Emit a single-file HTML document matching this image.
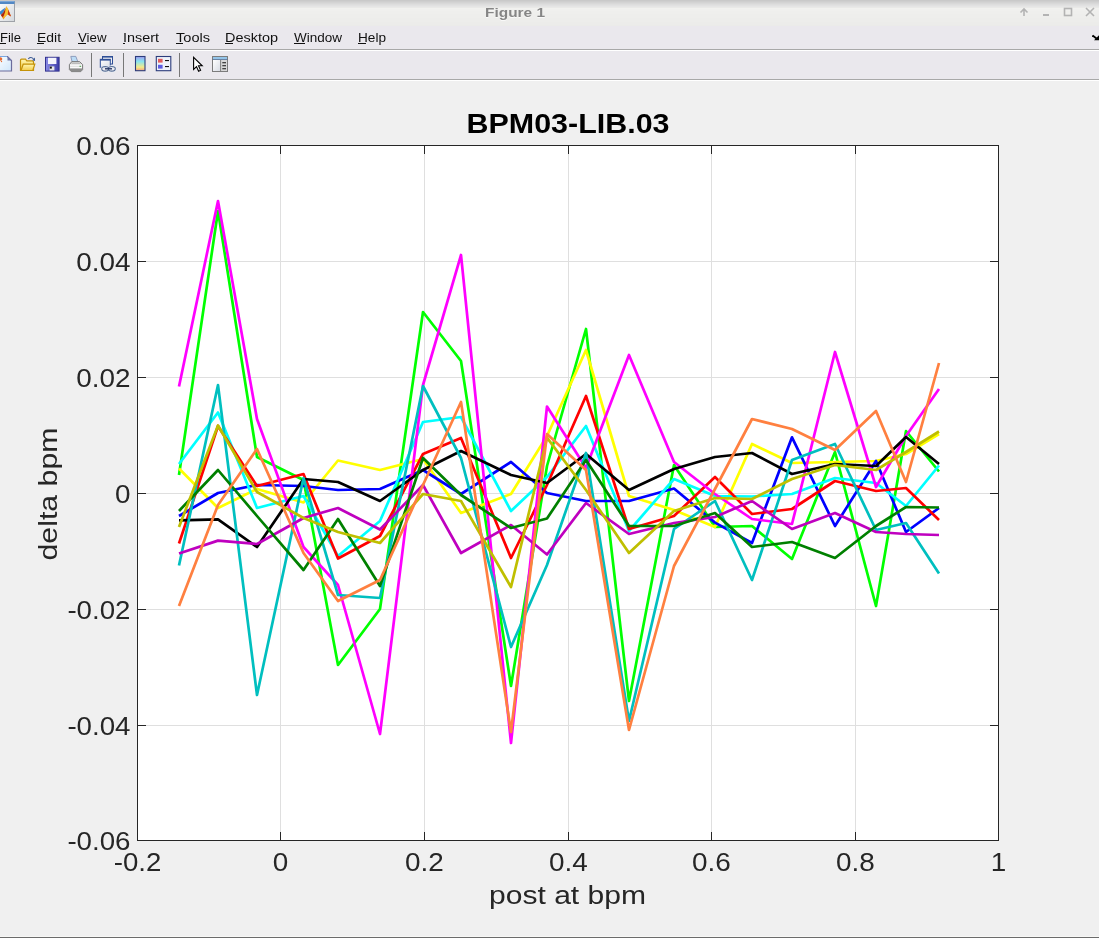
<!DOCTYPE html>
<html><head><meta charset="utf-8"><style>
html,body{margin:0;padding:0;width:1099px;height:938px;overflow:hidden;background:#f0f0f0;}
svg{display:block;will-change:transform;}
text{font-family:"Liberation Sans", sans-serif;}
</style></head><body>
<svg width="1099" height="938" viewBox="0 0 1099 938">
<defs>
<linearGradient id="tb" x1="0" y1="0" x2="0" y2="1">
<stop offset="0" stop-color="#c9c9c9"/><stop offset="0.15" stop-color="#d8d8d8"/><stop offset="0.28" stop-color="#e8e8e7"/><stop offset="0.33" stop-color="#f2f2f0"/><stop offset="0.55" stop-color="#eeeeec"/><stop offset="1" stop-color="#ebebe9"/>
</linearGradient>
</defs>
<!-- title bar -->
<rect x="0" y="0" width="1099" height="1" fill="#c9c9c9"/><rect x="0" y="1" width="1099" height="1" fill="#cecece"/><rect x="0" y="2" width="1099" height="1" fill="#d3d3d3"/><rect x="0" y="3" width="1099" height="1" fill="#d8d8d8"/><rect x="0" y="4" width="1099" height="1" fill="#dddddd"/><rect x="0" y="5" width="1099" height="1" fill="#e1e1e1"/><rect x="0" y="6" width="1099" height="1" fill="#e5e5e5"/><rect x="0" y="7" width="1099" height="1" fill="#e9e9e7"/><rect x="0" y="8" width="1099" height="1" fill="#f1f1ef"/><rect x="0" y="9" width="1099" height="1" fill="#f0f0ee"/><rect x="0" y="10" width="1099" height="1" fill="#f0f0ee"/><rect x="0" y="11" width="1099" height="1" fill="#efefed"/><rect x="0" y="12" width="1099" height="1" fill="#efefed"/><rect x="0" y="13" width="1099" height="1" fill="#efefed"/><rect x="0" y="14" width="1099" height="1" fill="#eeeeec"/><rect x="0" y="15" width="1099" height="1" fill="#eeeeec"/><rect x="0" y="16" width="1099" height="1" fill="#eeeeec"/><rect x="0" y="17" width="1099" height="1" fill="#eeeeec"/><rect x="0" y="18" width="1099" height="1" fill="#ededeb"/><rect x="0" y="19" width="1099" height="1" fill="#ededeb"/><rect x="0" y="20" width="1099" height="1" fill="#ededeb"/><rect x="0" y="21" width="1099" height="1" fill="#ededeb"/><rect x="0" y="22" width="1099" height="1" fill="#ececea"/><rect x="0" y="23" width="1099" height="1" fill="#ececea"/><rect x="0" y="24" width="1099" height="1" fill="#ececea"/><rect x="0" y="25" width="1099" height="1" fill="#ebebe9"/>
<text x="515" y="17.5" text-anchor="middle" font-size="13" font-weight="bold" fill="#ffffff" opacity="0.7" textLength="60" lengthAdjust="spacingAndGlyphs">Figure 1</text>
<text x="515" y="17" text-anchor="middle" font-size="13" font-weight="bold" fill="#858585" textLength="60" lengthAdjust="spacingAndGlyphs">Figure 1</text>
<!-- window buttons -->
<g stroke="#b3b3b3" stroke-width="1.6" fill="none">
<path d="M1024 16V9M1020.5 12.5L1024 9L1027.5 12.5"/>
<path d="M1043 15H1049" stroke-width="2"/>
<rect x="1064.5" y="8.5" width="7" height="7"/>
<path d="M1086 8L1094 16M1094 8L1086 16"/>
</g>
<!-- menu bar -->
<rect x="0" y="26" width="1099" height="23" fill="#eae8ed"/>
<rect x="0" y="49" width="1099" height="1" fill="#a8a8a8"/>
<rect x="0" y="50" width="1099" height="1" fill="#ffffff"/>
<g font-size="13" fill="#111">
<text x="0" y="42" textLength="21" lengthAdjust="spacingAndGlyphs">File</text><text x="37" y="42" textLength="24" lengthAdjust="spacingAndGlyphs">Edit</text><text x="78" y="42" textLength="28.5" lengthAdjust="spacingAndGlyphs">View</text><text x="123" y="42" textLength="36" lengthAdjust="spacingAndGlyphs">Insert</text><text x="176" y="42" textLength="34" lengthAdjust="spacingAndGlyphs">Tools</text><text x="225" y="42" textLength="53" lengthAdjust="spacingAndGlyphs">Desktop</text><text x="294" y="42" textLength="48" lengthAdjust="spacingAndGlyphs">Window</text><text x="358" y="42" textLength="28" lengthAdjust="spacingAndGlyphs">Help</text>
</g>
<g fill="#111">
<rect x="0" y="43" width="6" height="1"/><rect x="37" y="43" width="7" height="1"/><rect x="78" y="43" width="8" height="1"/><rect x="123" y="43" width="2" height="1"/><rect x="176" y="43" width="7" height="1"/><rect x="225" y="43" width="8" height="1"/><rect x="294" y="43" width="11" height="1"/><rect x="358" y="43" width="8" height="1"/>
</g>
<path d="M1092.6 35.6 L1096.5 38.4" stroke="#000" stroke-width="1.8" fill="none"/><path d="M1094 40.2 L1099.5 40.2 L1099.5 34.8 Z" fill="#000"/><rect x="1092" y="35.6" width="1.2" height="1.2" fill="#000"/>
<!-- toolbar -->
<rect x="0" y="51" width="1099" height="28" fill="#eae8ed"/>
<rect x="0" y="79" width="1099" height="1" fill="#a8a8a8"/>
<rect x="0" y="80" width="1099" height="1" fill="#ffffff"/>

<defs>
<linearGradient id="pg" x1="0" y1="0" x2="1" y2="1"><stop offset="0" stop-color="#ffffff"/><stop offset="1" stop-color="#cfe6fb"/></linearGradient>
<linearGradient id="fg" x1="0" y1="0" x2="0" y2="1"><stop offset="0" stop-color="#fff6b0"/><stop offset="1" stop-color="#f3cc4a"/></linearGradient>
<linearGradient id="flg" x1="0" y1="0" x2="1" y2="0"><stop offset="0" stop-color="#8c8ce6"/><stop offset="1" stop-color="#3c3ca8"/></linearGradient>
<linearGradient id="cbg" x1="0" y1="0" x2="0" y2="1"><stop offset="0" stop-color="#a09cf0"/><stop offset="0.35" stop-color="#88e4f0"/><stop offset="0.75" stop-color="#f4ec88"/><stop offset="1" stop-color="#f4a080"/></linearGradient>
<linearGradient id="wg" x1="0" y1="0" x2="1" y2="1"><stop offset="0" stop-color="#ffffff"/><stop offset="1" stop-color="#d8dce4"/></linearGradient>
<linearGradient id="ml" x1="0" y1="0" x2="1" y2="1"><stop offset="0" stop-color="#f8c020"/><stop offset="0.5" stop-color="#e86010"/><stop offset="1" stop-color="#a01810"/></linearGradient>
</defs>
<!-- matlab logo -->
<linearGradient id="lb" x1="0" y1="0" x2="1" y2="1"><stop offset="0" stop-color="#ffffff"/><stop offset="1" stop-color="#d4d8dc"/></linearGradient>
<rect x="-1" y="1.5" width="15.5" height="20" fill="url(#lb)" stroke="#9ea2a8" stroke-width="1"/>
<rect x="-1" y="1" width="15.5" height="3" fill="#5288c4"/>
<rect x="-1" y="1" width="15.5" height="1" fill="#7aa6d8"/>
<path d="M0 11.5 L3 9.2 L5.6 7.4 L4 11.5 L1.6 14.6 L0 14.4 Z" fill="#3a86cc"/>
<path d="M0.9 14.9 L3.2 12.8 L5.6 8.6 L6.4 6.2 L8.2 9.5 L11.1 16.6 L9.4 15.4 L7.4 14.6 L5.2 16.8 L3.4 19.6 Z" fill="#f09020"/>
<path d="M0.9 14.9 L3.2 12.8 L5.6 8.6 L5.2 12.4 L3.8 15.6 L2.4 17.2 Z" fill="#a82414"/>
<path d="M6.4 6.2 L8.2 9.5 L9.6 13.2 L7.4 14.6 L5.2 16.8 L3.4 19.6 L4.2 15.4 L5.4 11 Z" fill="#f8c030"/>
<path d="M8.2 9.5 L11.1 16.6 L9.4 15.4 L7.8 14.2 Z" fill="#c83818"/>
<!-- new -->
<path d="M-3 56.5 H7.5 L11.5 60.5 V71 H-3 Z" fill="url(#pg)" stroke="#6c6c9c" stroke-width="1.2"/>
<path d="M7.5 56.5 V60.5 H11.5 Z" fill="#6c74a8"/>
<path d="M-3 56.5 H7" stroke="#7aa6e0" stroke-width="1"/>
<circle cx="0.5" cy="59" r="1.8" fill="#e86a30"/><circle cx="1.5" cy="61.5" r="0.7" fill="#e86a30"/>
<!-- open -->
<path d="M20.5 70.5 V60.2 Q20.5 59.2 21.5 59.2 H25.5 L26.8 60.8 H32.5 Q33.5 60.8 33.5 62 V70.5 Z" fill="url(#fg)" stroke="#c49208" stroke-width="1.2"/>
<path d="M21 70.5 L23.2 64.2 H34.8 L32.8 70.5 Z" fill="url(#fg)" stroke="#c49208" stroke-width="1.2"/>
<path d="M28.3 58.8 Q31 56.2 33.5 59" stroke="#3c5a94" stroke-width="1.1" fill="none"/>
<path d="M32.2 60.2 L35 57.6 L35 61 Z" fill="#3c5a94"/>
<!-- save -->
<rect x="45.5" y="57.3" width="13.6" height="13.8" fill="url(#flg)" stroke="#32328e" stroke-width="1"/>
<rect x="48" y="57.8" width="8.4" height="6.2" fill="#f4f4fc"/>
<rect x="49.6" y="66.4" width="4.8" height="4" fill="#e8e8e8"/>
<rect x="49.8" y="66.6" width="2" height="2" fill="#111"/>
<!-- print -->
<path d="M70.8 56.4 H75.8 L78 62.2 H72.2 Z" fill="#bcdcf6" stroke="#7c8cb0" stroke-width="0.8"/>
<path d="M69.4 64.6 L71.8 61.6 H79.6 L82.6 64.6 V69.6 L80.8 71.6 H71.4 L69.4 69.6 Z" fill="#e4e4e4" stroke="#6e6e6e" stroke-width="0.9"/>
<path d="M70 65.2 H82 M70.2 67.6 H82" stroke="#ffffff" stroke-width="0.9"/>
<path d="M69.6 68.6 H82.4 V69.8 L80.8 71.4 H71.2 L69.6 69.8 Z" fill="#8c8c8c"/>
<path d="M71.6 63.2 H80.4" stroke="#9a9a9a" stroke-width="0.8"/>
<rect x="79.6" y="65.8" width="1.3" height="1" fill="#30a030"/>
<!-- link figure -->
<rect x="102.5" y="56.5" width="10" height="7.5" fill="#f0f0f4" stroke="#2e4e96" stroke-width="1"/>
<rect x="102.5" y="56" width="10" height="1.6" fill="#2e4e96"/>
<rect x="100.3" y="59.3" width="10" height="8" fill="url(#wg)" stroke="#2e4e96" stroke-width="1"/>
<rect x="100.3" y="59" width="10" height="1.6" fill="#2e4e96"/>
<ellipse cx="105.2" cy="68.8" rx="3.5" ry="2.3" fill="none" stroke="#e8eef6" stroke-width="2.4"/>
<ellipse cx="111.8" cy="68.8" rx="3.5" ry="2.3" fill="none" stroke="#e8eef6" stroke-width="2.4"/>
<ellipse cx="105.2" cy="68.8" rx="3.5" ry="2.3" fill="none" stroke="#5a6e94" stroke-width="1.1"/>
<ellipse cx="111.8" cy="68.8" rx="3.5" ry="2.3" fill="none" stroke="#5a6e94" stroke-width="1.1"/>
<path d="M105 68.8 H112" stroke="#1e2e5e" stroke-width="1.3"/>
<!-- colorbar -->
<rect x="135.5" y="56.5" width="9.5" height="14.2" fill="url(#cbg)" stroke="#2c3c7c" stroke-width="1.1"/>
<!-- legend -->
<rect x="156.3" y="56.5" width="14.5" height="14.2" fill="#eef2fa" stroke="#2c3c7c" stroke-width="1.1"/>
<rect x="158" y="58.8" width="4.6" height="3.8" fill="#e25c5c"/>
<rect x="158" y="64.8" width="4.6" height="3.8" fill="#5c5ce2"/>
<rect x="165" y="60" width="4" height="1.1" fill="#111"/>
<rect x="165" y="66" width="4" height="1.1" fill="#111"/>
<!-- pointer -->
<path d="M193.6 57.4 V69.4 L196.5 66.6 L198.6 71.2 L200.6 70.3 L198.5 65.8 H202.2 Z" fill="#fff" stroke="#000" stroke-width="1.1" stroke-linejoin="miter"/>
<!-- panel -->
<rect x="212.5" y="56.5" width="15" height="15" fill="#d8d8d8" stroke="#7c7c7c" stroke-width="1"/>
<rect x="213" y="57" width="14" height="2" fill="#94c4e8"/>
<path d="M212.5 59.5 H227.5" stroke="#4c6c94" stroke-width="0.8"/>
<rect x="213" y="60" width="7.3" height="11" fill="url(#wg)"/>
<path d="M220.6 60 V71" stroke="#808080" stroke-width="1"/>
<path d="M222.3 62.8 H226 M222.3 65.8 H226 M222.3 68.8 H226" stroke="#111" stroke-width="1.1"/>

<g stroke="#777" stroke-width="1"><path d="M91.5 53V77M123.5 53V77M179.5 53V77"/></g>
<!-- axes -->
<rect x="137" y="145" width="861" height="695" fill="#ffffff"/>
<path d="M280.5 145V840M424.5 145V840M568.5 145V840M711.5 145V840M855.5 145V840M137 725.5H998M137 609.5H998M137 493.5H998M137 377.5H998M137 261.5H998" stroke="#dfdfdf" stroke-width="1" fill="none"/>
<g fill="none" stroke-width="2.7" stroke-linejoin="round" stroke-linecap="butt">
<path d="M179 475 L218 211 L257 457 L303.5 480 L338 665 L380 609 L423 312 L461 361 L511 686 L547 466 L586 329 L629 701 L674 465 L715 527 L752 526 L792 559 L835 452 L876 606 L906 431 L939 471.5" stroke="#00ff00"/>
<path d="M179 468.5 L218 508 L257 489 L303.5 502.5 L338 460.5 L380 470 L423 459 L461 513 L511 494 L547 436 L586 350 L629 496 L674 510 L715 527 L752 444 L792 463 L835 462 L876 461 L906 454 L939 434" stroke="#ffff00"/>
<path d="M179 516 L218 493 L257 485 L303.5 486 L338 490 L380 489 L423 470 L461 494 L511 462 L547 493 L586 501 L629 501 L674 488.5 L715 522.6 L752 543 L792 437.3 L835 526 L876 461 L906 532 L939 508" stroke="#0000ff"/>
<path d="M179 464 L218 412.5 L257 508 L303.5 496 L338 556 L380 521 L423 422 L461 417 L511 511 L547 477 L586 426 L629 531 L674 479 L715 496 L752 496.5 L792 494 L835 478 L876 483 L906 506 L939 465.5" stroke="#00ffff"/>
<path d="M179 543.5 L218 426 L257 486 L303.5 474 L338 558.5 L380 536 L423 454 L461 438 L511 558 L547 485 L586 396 L629 529 L674 516 L715 477 L752 514 L792 509 L835 481 L876 491 L906 488 L939 520" stroke="#ff0000"/>
<path d="M179 386.5 L218 201 L257 419 L303.5 547 L338 585 L380 734 L423 385 L461 255 L511 743 L547 406.5 L586 468 L629 355 L674 462 L715 494 L752 519 L792 524 L835 352 L876 487 L906 436 L939 389" stroke="#ff00ff"/>
<path d="M179 520.4 L218 519.4 L257 547 L303.5 479 L338 482 L380 501 L423 470 L461 451 L511 475 L547 483 L586 454 L629 490 L674 469 L715 457 L752 453 L792 474 L835 464 L876 466 L906 437 L939 464" stroke="#000000"/>
<path d="M179 565.5 L218 385 L257 695 L303.5 478 L338 595 L380 598 L423 386 L461 458 L511 647 L547 565 L586 453 L629 721 L674 529 L715 501 L752 580 L792 460 L835 444 L876 530 L906 523 L939 573.5" stroke="#00bfbf"/>
<path d="M179 553.5 L218 540.6 L257 544 L303.5 518 L338 508 L380 529.5 L423 485 L461 553 L511 525 L547 554.5 L586 503 L629 534 L674 523 L715 517 L752 501 L792 529 L835 513 L876 532 L906 534 L939 535" stroke="#bf00bf"/>
<path d="M179 511 L218 470 L257 516 L303.5 570 L338 519 L380 586 L423 458 L461 495 L511 528 L547 518.5 L586 460 L629 526 L674 526 L715 513 L752 547 L792 542 L835 558 L876 526 L906 507 L939 507.5" stroke="#008000"/>
<path d="M179 527 L218 425.5 L257 492 L303.5 518 L338 532 L380 543 L423 494 L461 501 L511 587 L547 437.6 L586 490 L629 553 L674 511 L715 498 L752 499 L792 479 L835 465 L876 470 L906 452 L939 431.5" stroke="#bfbf00"/>
<path d="M179 606 L218 505 L257 449 L303.5 553 L338 601 L380 580 L423 485 L461 402 L511 732 L547 434 L586 470 L629 730 L674 566 L715 489 L752 419 L792 429 L835 450 L876 411 L906 482 L939 363" stroke="#ff8040"/>
</g>
<path d="M137.5 841v-9M137.5 145v9M280.5 841v-9M280.5 145v9M424.5 841v-9M424.5 145v9M568.5 841v-9M568.5 145v9M711.5 841v-9M711.5 145v9M855.5 841v-9M855.5 145v9M998.5 841v-9M998.5 145v9M137 840.5h9M999 840.5h-9M137 725.5h9M999 725.5h-9M137 609.5h9M999 609.5h-9M137 493.5h9M999 493.5h-9M137 377.5h9M999 377.5h-9M137 261.5h9M999 261.5h-9M137 145.5h9M999 145.5h-9" stroke="#262626" stroke-width="1" fill="none"/>
<rect x="137.5" y="145.5" width="861" height="695" fill="none" stroke="#262626" stroke-width="1"/>
<g font-size="25" fill="#262626" text-anchor="middle">
<text x="137.5" y="871" textLength="47.6" lengthAdjust="spacingAndGlyphs">-0.2</text>
<text x="280.5" y="871" textLength="15.5" lengthAdjust="spacingAndGlyphs">0</text>
<text x="424.5" y="871" textLength="38.8" lengthAdjust="spacingAndGlyphs">0.2</text>
<text x="568.5" y="871" textLength="38.8" lengthAdjust="spacingAndGlyphs">0.4</text>
<text x="711.5" y="871" textLength="38.8" lengthAdjust="spacingAndGlyphs">0.6</text>
<text x="855.5" y="871" textLength="38.8" lengthAdjust="spacingAndGlyphs">0.8</text>
<text x="998.5" y="871" textLength="15.5" lengthAdjust="spacingAndGlyphs">1</text>
</g>
<g font-size="25" fill="#262626" text-anchor="end">
<text x="130.5" y="850" textLength="63.1" lengthAdjust="spacingAndGlyphs">-0.06</text>
<text x="130.5" y="735" textLength="63.1" lengthAdjust="spacingAndGlyphs">-0.04</text>
<text x="130.5" y="619" textLength="63.1" lengthAdjust="spacingAndGlyphs">-0.02</text>
<text x="130.5" y="503" textLength="15.5" lengthAdjust="spacingAndGlyphs">0</text>
<text x="130.5" y="387" textLength="54.3" lengthAdjust="spacingAndGlyphs">0.02</text>
<text x="130.5" y="271" textLength="54.3" lengthAdjust="spacingAndGlyphs">0.04</text>
<text x="130.5" y="155" textLength="54.3" lengthAdjust="spacingAndGlyphs">0.06</text>
</g>
<text x="568" y="133" text-anchor="middle" font-size="27" font-weight="bold" fill="#000" textLength="203" lengthAdjust="spacingAndGlyphs">BPM03-LIB.03</text>
<text x="567.5" y="903.5" text-anchor="middle" font-size="26.5" fill="#262626" textLength="157" lengthAdjust="spacingAndGlyphs">post at bpm</text>
<text transform="translate(57 494) rotate(-90)" text-anchor="middle" font-size="26.5" fill="#262626" textLength="133" lengthAdjust="spacingAndGlyphs">delta bpm</text>
<!-- bottom border -->
<rect x="0" y="936" width="1099" height="1" fill="#f7f7f5"/>
<rect x="0" y="937" width="1099" height="1" fill="#6b6b6b"/>
</svg>
</body></html>
